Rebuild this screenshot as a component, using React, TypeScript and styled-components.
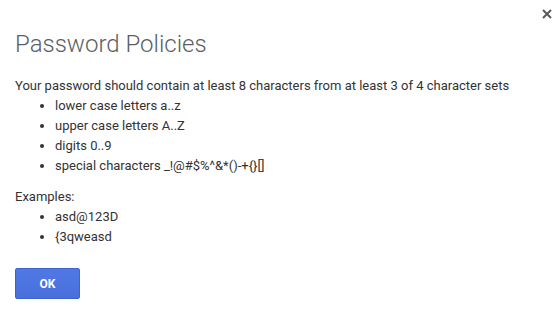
import React, { FC } from 'react'
import styled, { createGlobalStyle } from 'styled-components'

const GlobalStyle = createGlobalStyle`
    html, body {
        margin: 0;
        padding: 0;
        background: #ffffff;
    }
    body {
        font-family: Roboto, "Liberation Sans", sans-serif;
    }
`

const Dialog = styled.div`
    position: relative;
    width: 557px;
    height: 314px;
    box-sizing: border-box;
    padding: 28px 15px 0 15px;
    background: #ffffff;
    color: #333333;
`
const CloseButton = styled.button`
    position: absolute;
    top: 6px;
    right: 2px;
    width: 16px;
    height: 16px;
    padding: 0;
    border: none;
    background: transparent;
    display: flex;
    align-items: center;
    justify-content: center;
    cursor: pointer;
`
const Title = styled.h1`
    margin: 0;
    font-size: 24px;
    font-weight: 300;
    line-height: 32px;
    color: #5a5f66;
`
const Body = styled.div`
    margin-top: 16px;
    font-size: 13px;
    line-height: 20px;
`
const Paragraph = styled.p`
    margin: 0;
`
const BulletList = styled.ul`
    margin: 0 0 11px 0;
    padding-left: 40px;
    list-style: disc;
`
const Item = styled.li`
    line-height: 20px;
`
const OkButton = styled.button`
    margin-top: 10px;
    width: 65px;
    height: 31px;
    border: 1px solid #3d63cc;
    border-radius: 2px;
    background: linear-gradient(#5079e6, #4a6fdc);
    color: #ffffff;
    font-family: Roboto, "Liberation Sans", sans-serif;
    font-size: 12px;
    font-weight: 700;
    cursor: pointer;
`

const rules = ['lower case letters a..z', 'upper case letters A..Z', 'digits 0..9', 'special characters _!@#$%^&*()-+{}[]']
const examples = ['asd@123D', '{3qweasd']

const App: FC = () => {
    return (
        <>
            <GlobalStyle />
            <Dialog>
                <CloseButton aria-label="Close">
                    <svg width="10" height="10" viewBox="0 0 10 10">
                        <path d="M1 1 L9 9 M9 1 L1 9" stroke="#555a60" strokeWidth="2" />
                    </svg>
                </CloseButton>
                <Title>Password Policies</Title>
                <Body>
                    <Paragraph>Your password should contain at least 8 characters from at least 3 of 4 character sets</Paragraph>
                    <BulletList>
                        {rules.map(rule => <Item key={rule}>{rule}</Item>)}
                    </BulletList>
                    <Paragraph>Examples:</Paragraph>
                    <BulletList>
                        {examples.map(example => <Item key={example}>{example}</Item>)}
                    </BulletList>
                </Body>
                <OkButton>OK</OkButton>
            </Dialog>
        </>
    )
}

export default App
